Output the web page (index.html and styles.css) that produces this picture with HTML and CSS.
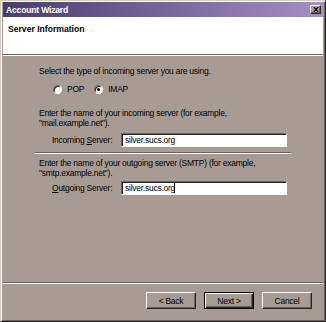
FILE: index.html
```html
<!DOCTYPE html>
<html lang="en">
<head>
    <meta charset="UTF-8">
    <title>Account Wizard</title>
    <link rel="stylesheet" href="styles.css">
</head>
<body>
    <div class="window">
        <div class="titlebar">
            <span class="title">Account Wizard</span>
            <button class="close-btn">
                <svg width="6" height="5" viewBox="0 0 8 7">
                    <path d="M0 0h2l2 2 2-2h2L5 3.5 8 7H6L4 5 2 7H0l3-3.5z" fill="#000"/>
                </svg>
            </button>
        </div>

        <div class="page-header">
            <div class="page-title">Server Information</div>
        </div>
        <div class="etched"></div>

        <div class="content">
            <p class="text">Select the type of incoming server you are using.</p>
            <div class="radio-row">
                <label class="radio"><span class="radio-dot"></span>POP</label>
                <label class="radio"><span class="radio-dot checked"></span>IMAP</label>
            </div>

            <p class="text incoming-text">Enter the name of your incoming server (for example,<br>"mail.example.net").</p>
            <div class="field incoming-field">
                <span class="field-label">Incoming <u>S</u>erver:</span>
                <div class="input">silver.sucs.org</div>
            </div>

            <div class="etched inner-sep"></div>

            <p class="text">Enter the name of your outgoing server (SMTP) (for example,<br>"smtp.example.net").</p>
            <div class="field outgoing-field">
                <span class="field-label"><u>O</u>utgoing Server:</span>
                <div class="input">silver.sucs.org<span class="caret"></span></div>
            </div>
        </div>

        <div class="etched"></div>
        <div class="footer">
            <button class="btn">&lt; Back</button>
            <button class="btn btn-default">Next &gt;</button>
            <button class="btn">Cancel</button>
        </div>
    </div>
</body>
</html>
```

FILE: styles.css
```css
* {
    margin: 0;
    padding: 0;
    box-sizing: border-box;
}

body {
    font-family: 'Liberation Sans', Arial, sans-serif;
    font-size: 8.5px;
    letter-spacing: -0.25px;
    color: #000;
    background: #a89b93;
}

.window {
    width: 326px;
    height: 322px;
    background: #a89b93;
    border: 1px solid;
    border-color: #d6ccc6 #2a2522 #2a2522 #d6ccc6;
    box-shadow: inset 1px 1px 0 #fff, inset -1px -1px 0 #6e625c;
    padding: 1px 2px 2px 2px;
    display: flex;
    flex-direction: column;
}

.titlebar {
    height: 15px;
    flex-shrink: 0;
    background: linear-gradient(90deg, #493d6c 0%, #a78dc4 100%);
    display: flex;
    align-items: center;
    justify-content: space-between;
    padding: 0 2px 0 3px;
}

.title {
    color: #fff;
    font-weight: bold;
    font-size: 8.6px;
    letter-spacing: -0.2px;
}

.close-btn {
    width: 11px;
    height: 9px;
    background: #a89b93;
    border: 1px solid;
    border-color: #fff #2a2522 #2a2522 #fff;
    box-shadow: inset -1px -1px 0 #6e625c;
    display: flex;
    align-items: center;
    justify-content: center;
}

.page-header {
    background: #fff;
    height: 37px;
    flex-shrink: 0;
    padding: 7px 5px;
}

.page-title {
    font-weight: bold;
    font-size: 8.6px;
    letter-spacing: 0;
}

.etched {
    height: 2px;
    flex-shrink: 0;
    border-top: 1px solid #6e625c;
    border-bottom: 1px solid #fff;
}

.content {
    flex: 1;
    padding: 10px 32px 0 36px;
    display: flex;
    flex-direction: column;
}

.text {
    line-height: 10px;
}

.radio-row {
    display: flex;
    gap: 10px;
    margin-top: 8px;
    padding-left: 14px;
}

.radio {
    display: flex;
    align-items: center;
    gap: 5px;
    line-height: 10px;
}

.radio-dot {
    width: 9px;
    height: 9px;
    border-radius: 50%;
    background: #fff;
    border: 1px solid;
    border-color: #6e625c #fff #fff #6e625c;
    box-shadow: inset 1px 1px 0 #2a2522;
    display: flex;
    align-items: center;
    justify-content: center;
}

.radio-dot.checked::after {
    content: "";
    width: 3px;
    height: 3px;
    border-radius: 50%;
    background: #000;
}

.incoming-text {
    margin-top: 14px;
}

.field {
    display: flex;
    align-items: center;
    padding-left: 13px;
}

.incoming-field {
    margin-top: 5px;
}

.outgoing-field {
    margin-top: 3px;
}

.field-label {
    width: 69px;
}

.input {
    width: 166px;
    height: 14px;
    background: #fff;
    border: 1px solid;
    border-color: #6e625c #fff #fff #6e625c;
    box-shadow: inset 1px 1px 0 #2a2522;
    padding: 1px 3px;
    line-height: 11px;
}

.caret {
    display: inline-block;
    width: 0;
    height: 10px;
    border-left: 1px solid #000;
    vertical-align: -2px;
    margin-left: -1px;
}

.inner-sep {
    margin: 5px 0 4px -4px;
}

.footer {
    height: 35px;
    flex-shrink: 0;
    display: flex;
    justify-content: flex-end;
    align-items: flex-start;
    gap: 8px;
    padding: 8px 11px 0 0;
}

.btn {
    width: 50px;
    height: 17px;
    font-family: inherit;
    font-size: 8.5px;
    letter-spacing: -0.25px;
    background: #a89b93;
    color: #000;
    border: 1px solid;
    border-color: #fff #2a2522 #2a2522 #fff;
    box-shadow: inset -1px -1px 0 #6e625c;
}

.btn-default {
    border: 1px solid #000;
    box-shadow: inset 1px 1px 0 #fff, inset -1px -1px 0 #2a2522, inset -2px -2px 0 #6e625c;
}
```
